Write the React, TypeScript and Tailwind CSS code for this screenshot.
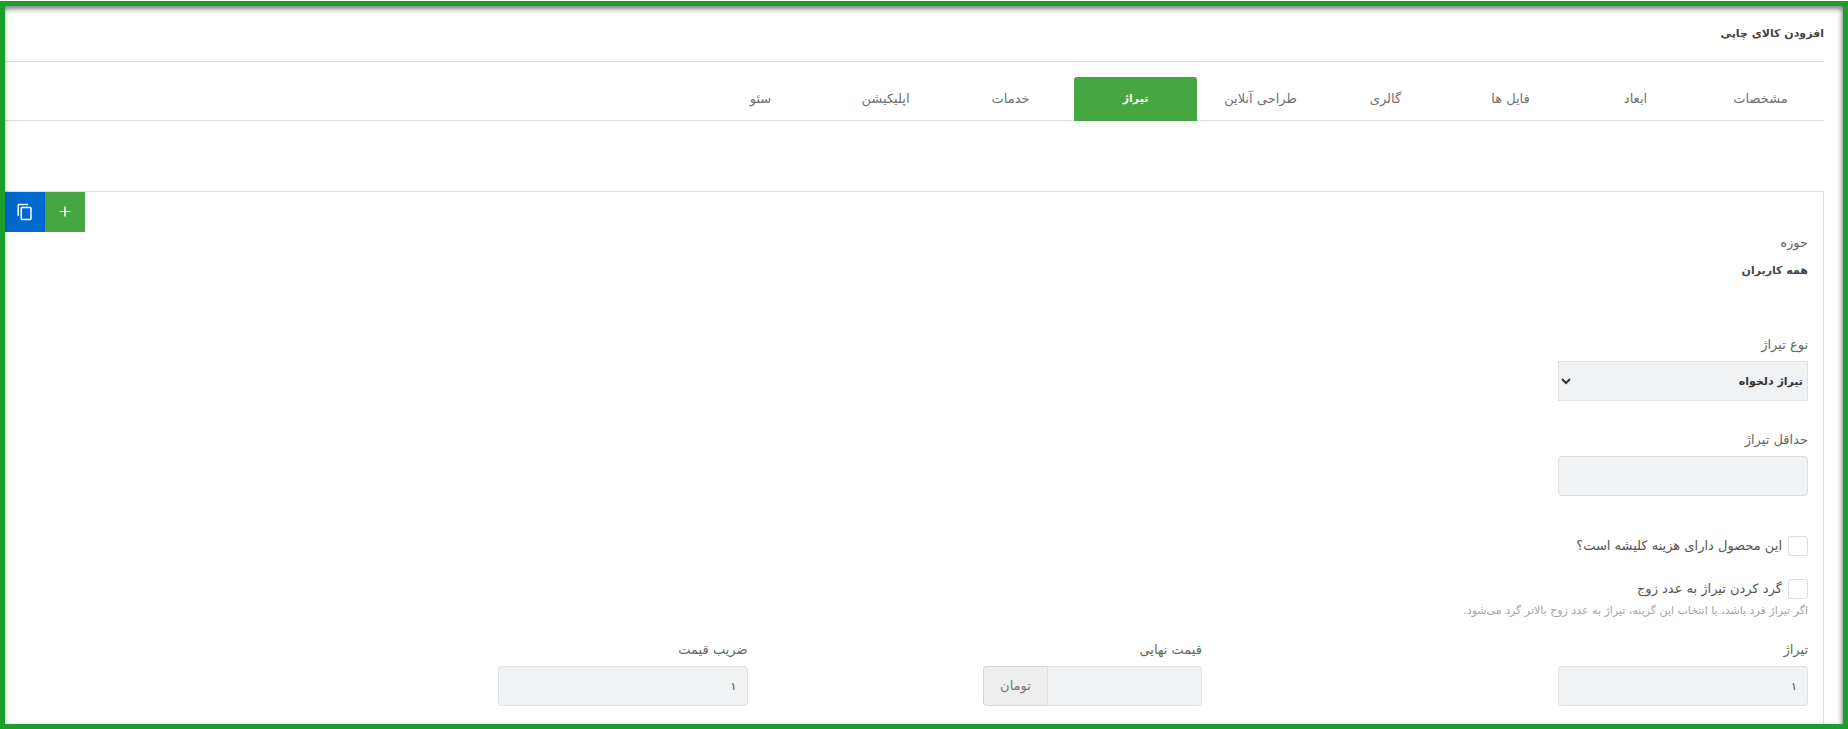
import React, { useState } from "react";
import clsx from "clsx";
import { MdContentCopy } from "react-icons/md";

const tabs = [
  "مشخصات",
  "ابعاد",
  "فایل ها",
  "گالری",
  "طراحی آنلاین",
  "تیراژ",
  "خدمات",
  "اپلیکیشن",
  "سئو",
];

const inputClass =
  "h-10 w-full rounded border border-[#dddfe1] bg-[#f1f2f4] px-2.5 text-[11px] text-[#444] outline-none";

interface FieldProps {
  id: string;
  label: string;
  className?: string;
  children: React.ReactNode;
}

function Field({ id, label, className, children }: FieldProps) {
  return (
    <div className={className}>
      <label htmlFor={id} className="mb-1.5 block text-[13px] leading-5 text-[#666]">
        {label}
      </label>
      {children}
    </div>
  );
}

interface CheckFieldProps {
  id: string;
  label: string;
}

function CheckField({ id, label }: CheckFieldProps) {
  return (
    <div className="flex items-center gap-1.5">
      <input
        id={id}
        type="checkbox"
        className="size-5 shrink-0 appearance-none rounded-[3px] border border-[#dcdcdc] bg-white checked:bg-[#46a641]"
      />
      <label htmlFor={id} className="text-[13px] leading-5 text-[#555]">
        {label}
      </label>
    </div>
  );
}

function PageTabs() {
  const [active, setActive] = useState("تیراژ");

  return (
    <nav className="flex gap-0.5 border-b border-[#ddd] pt-[15px] pr-0.5">
      {tabs.map((tab) => (
        <button
          key={tab}
          type="button"
          onClick={() => setActive(tab)}
          className={clsx(
            "-mb-px h-11 w-[123px] rounded-t-[3px]",
            tab === active
              ? "bg-[#46a641] text-[11px] font-bold text-white"
              : "text-[13px] text-[#707070]"
          )}
        >
          {tab}
        </button>
      ))}
    </nav>
  );
}

export default function App() {
  return (
    <div
      dir="rtl"
      lang="fa"
      className="flex min-h-screen flex-col bg-white pt-px font-['DejaVu_Sans',sans-serif]"
    >
      <main className="relative flex flex-1 flex-col border-5 border-[#1c9e2d] pr-[19px]">
        <header className="flex h-14 items-center border-b border-[#ddd]">
          <h1 className="text-[11px] leading-5 font-bold text-[#444]">افزودن کالای چاپی</h1>
        </header>

        <PageTabs />

        <form className="mt-[70px] flex-1 border-t border-r border-[#ddd] pb-4">
          {/* Row actions */}
          <div className="flex justify-end">
            <button
              type="button"
              aria-label="افزودن"
              className="flex size-10 items-center justify-center bg-[#46a641] text-white"
            >
              <svg className="size-3" viewBox="0 0 12 12" stroke="currentColor" fill="none">
                <path d="M0.5 5.5h11" />
                <path d="M6 0.5v10" strokeWidth={1.5} />
              </svg>
            </button>
            <button
              type="button"
              aria-label="کپی"
              className="flex size-10 items-center justify-center bg-[#0069ce] text-white"
            >
              <MdContentCopy size={18} />
            </button>
          </div>

          <div className="px-[15px] pt-px">
            <p className="text-[13px] leading-5 text-[#666]">حوزه</p>
            <p className="mt-2 text-[11px] leading-5 font-bold text-[#444]">همه کاربران</p>

            <Field id="type" label="نوع تیراژ" className="mt-[54px] w-[250px]">
              <select
                id="type"
                className="block h-10 w-full border border-[#dddfe1] bg-[#f1f2f4] text-[11px] font-bold text-[#333]"
              >
                <option>تیراژ دلخواه</option>
              </select>
            </Field>

            <Field id="min" label="حداقل تیراژ" className="mt-[29px] w-[250px]">
              <input id="min" type="text" className={clsx(inputClass, "block")} />
            </Field>

            <div className="mt-10">
              <CheckField id="cliche" label="این محصول دارای هزینه کلیشه است؟" />
            </div>
            <div className="mt-[23px]">
              <CheckField id="even" label="گرد کردن تیراژ به عدد زوج" />
              <p className="mt-0.5 text-[11px] leading-5 text-[#a4a4a4]">
                اگر تیراژ فرد باشد، با انتخاب این گزینه، تیراژ به عدد زوج بالاتر گرد می‌شود.
              </p>
            </div>
          </div>

          {/* Price row */}
          <div className="mt-[19px] grid grid-cols-12">
            <div className="col-span-4 px-[15px]">
              <Field id="count" label="تیراژ" className="w-[250px]">
                <input id="count" type="text" defaultValue="۱" className={inputClass} />
              </Field>
            </div>
            <div className="col-span-3 px-[15px]">
              <Field id="price" label="قیمت نهایی" className="w-[219px]">
                <div className="flex">
                  <input
                    id="price"
                    type="text"
                    className={clsx(inputClass, "min-w-0 flex-1 rounded-l-none")}
                  />
                  <span className="flex w-16 items-center justify-center rounded-l border border-r-0 border-[#d4d4d4] bg-[#eee] text-[13px] text-[#777]">
                    تومان
                  </span>
                </div>
              </Field>
            </div>
            <div className="col-span-4 px-[15px]">
              <Field id="ratio" label="ضریب قیمت" className="w-[250px]">
                <input id="ratio" type="text" defaultValue="۱" className={inputClass} />
              </Field>
            </div>
          </div>
        </form>

        <div className="pointer-events-none absolute inset-0 shadow-[inset_-1px_3px_5px_rgba(0,0,0,0.5)]" />
      </main>
    </div>
  );
}
